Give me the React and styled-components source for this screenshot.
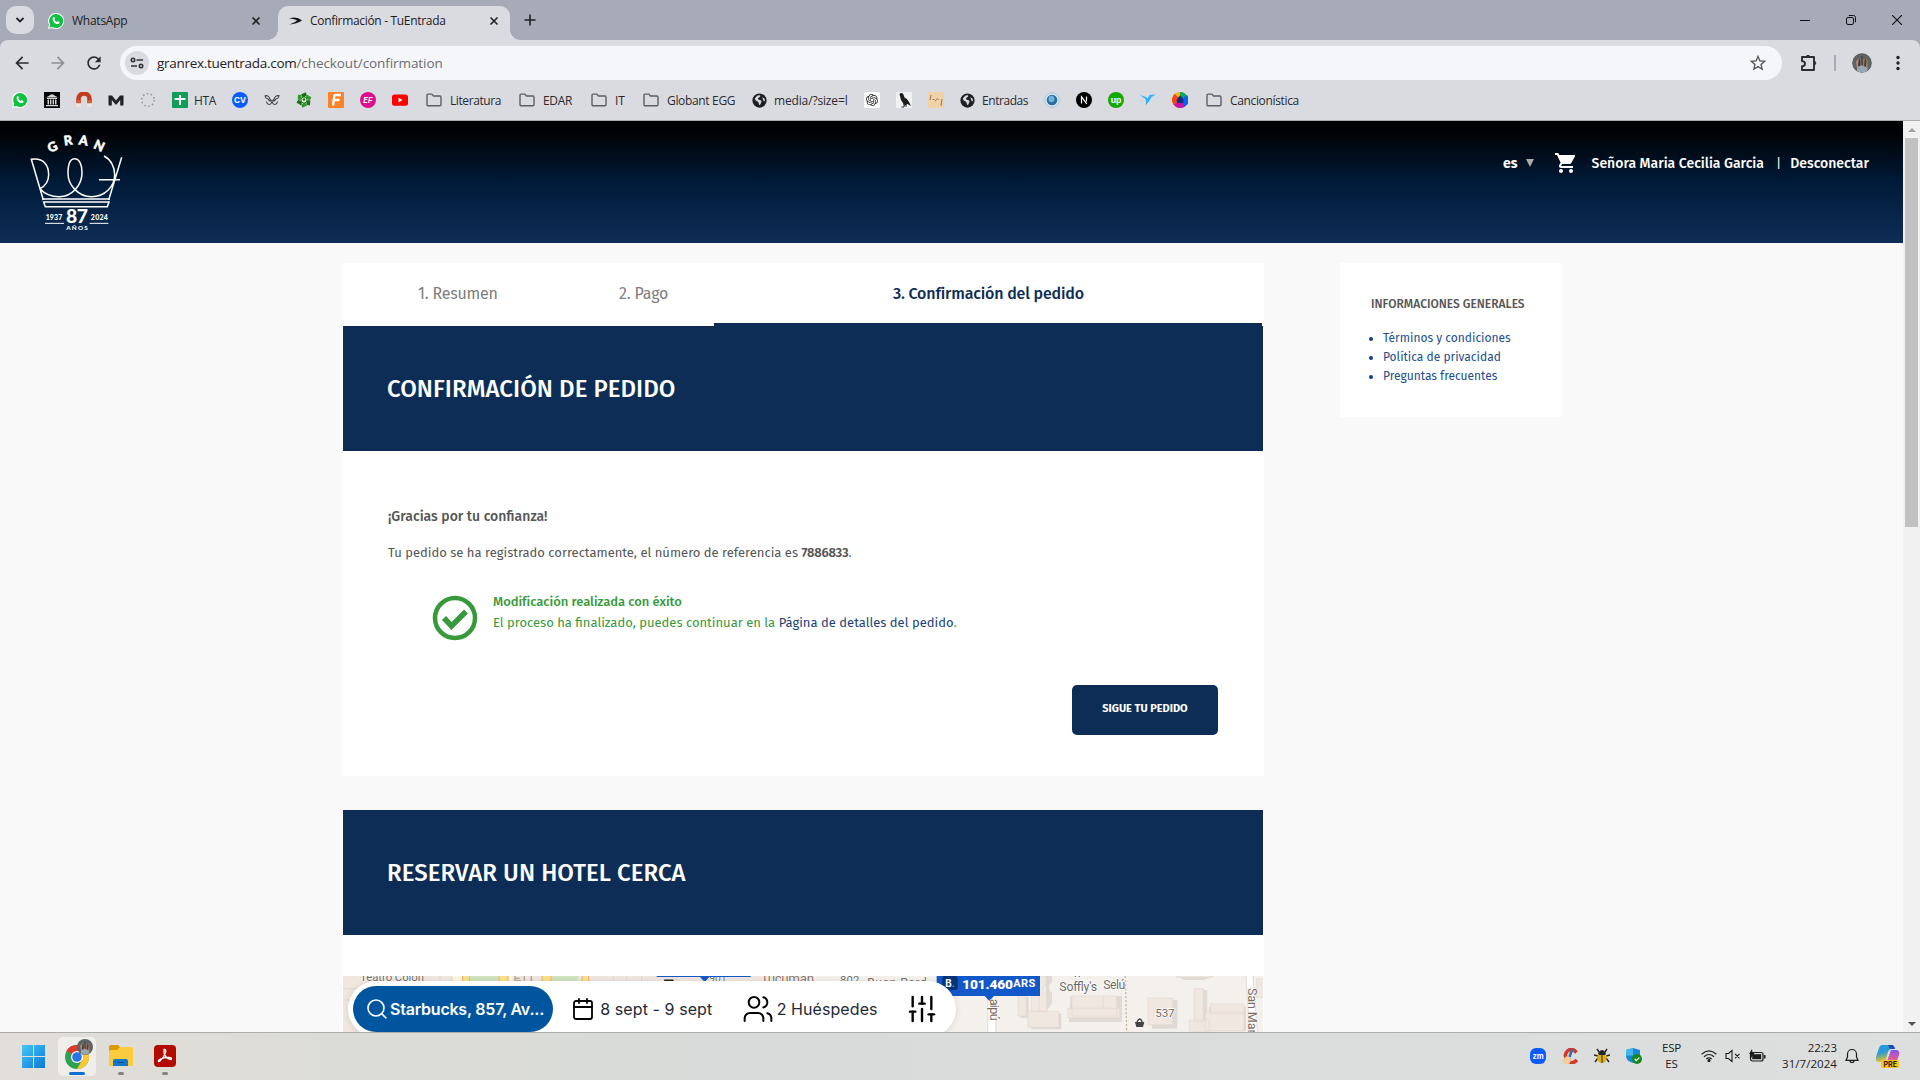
import React from "react";
import styled, { createGlobalStyle, css } from "styled-components";
import { SiOpenai } from "react-icons/si";
import { Search, Calendar, Users, SlidersVertical } from "lucide-react";
import { MdShoppingCart, MdStarBorder, MdArrowBack, MdArrowForward, MdRefresh } from "react-icons/md";

const NAVY = "#0e2d56";
const ui = '"Open Sans", "Noto Sans", sans-serif';
const site = '"Fira Sans", "Noto Sans", "Open Sans", sans-serif';

const Global = createGlobalStyle`
  * { box-sizing: border-box; }
  body { margin: 0; overflow: hidden; font-family: ${ui}; }
  svg { display: block; flex: none; }
`;
const Screen = styled.div`
  width: 1920px; height: 1080px; display: flex; flex-direction: column; overflow: hidden; background: #f9f9f9;
`;
const Label = styled.span`
  font-size: ${(p) => p.$size || 12}px;
  font-weight: ${(p) => p.$weight || 400};
  letter-spacing: ${(p) => p.$ls || 0}px;
  color: ${(p) => p.$color || "inherit"};
  white-space: pre;
`;

/* ---------- browser chrome ---------- */
const TabStrip = styled.div`
  height: 40px; flex: none; background: #a7abb7; display: flex; align-items: flex-end; padding-left: 6px; color: #1f2024;
`;
const TabSearch = styled.div`
  width: 28px; height: 28px; margin-bottom: 6px; border-radius: 10px; background: #dadbe1; display: grid; place-items: center;
`;
const Tab = styled.div`
  position: relative; height: 34px; width: ${(p) => p.$w}px; display: flex; align-items: center; gap: ${(p) => p.$gap}px;
  padding: 0 11px 5px 10px; margin-left: ${(p) => p.$ml}px; border-radius: 10px 10px 0 0;
  ${(p) => p.$active && css`
    background: #dadbe1;
    &::before, &::after { content: ""; position: absolute; bottom: 0; width: 10px; height: 10px; }
    &::before { left: -10px; background: radial-gradient(circle at 0 0, transparent 9.5px, #dadbe1 10px); }
    &::after { right: -10px; background: radial-gradient(circle at 100% 0, transparent 9.5px, #dadbe1 10px); }
  `}
  > svg:last-child { margin-left: auto; }
`;
const NewTab = styled.div`margin: 0 auto 14px 14px;`;
const WindowButtons = styled.div`display: flex; gap: 36px; padding: 0 18px 15px 0;`;
const Toolbar = styled.div`
  height: 40px; flex: none; background: #a7abb7;
`;
const ToolbarInner = styled.div`
  height: 40px; background: #dadbe1; border-radius: 8px 8px 0 0; display: flex; align-items: center; padding: 6px 14px 0 12px; color: #2b2c30;
`;
const NavIcons = styled.div`display: flex; gap: 16px; width: 108px; > :nth-child(2) { color: #8e9097; }`;
const Omnibox = styled.div`
  width: 1662px; flex: none; height: 34px; border-radius: 17px; background: #f5f6f9; display: flex; align-items: center; padding: 0 14px 0 5px;
  > svg:last-child { margin-left: auto; }
`;
const SiteInfo = styled.div`width: 24px; height: 24px; border-radius: 50%; background: #dadbe1; display: grid; place-items: center; margin-right: 8px;`;
const ToolRight = styled.div`display: flex; align-items: center; margin: 0 24px 0 17px;`;
const Divider = styled.i`width: 2px; height: 16px; background: #a7abb7; margin: 0 16px 0 15px;`;
const Avatar = styled.div`
  width: 20px; height: 20px; border-radius: 50%; overflow: hidden;
`;
const BookmarkBar = styled.div`
  height: 41px; flex: none; background: #dadbe1; border-bottom: 1px solid #a9abaf; display: flex; align-items: center; padding-left: 4px; color: #2a2b2f;
`;
const Bookmark = styled.div`
  width: ${(p) => p.$w || 32}px; padding-left: 8px; display: flex; align-items: center; gap: ${(p) => p.$gap ?? 8}px; flex: none; height: 24px;
`;

/* ---------- page ---------- */
const Viewport = styled.div`height: 911px; flex: none; display: flex; overflow: hidden;`;
const Page = styled.div`width: 1903px; font-family: ${site}; overflow: hidden; background: #f9f9f9;`;
const SiteHeader = styled.header`
  height: 122px; background: linear-gradient(#000 0%, #000509 14%, #001a38 50%, #0e2d57 100%); display: flex; justify-content: space-between;
  padding: 11px 34px 0 25px; color: #fff;
`;
const UserNav = styled.nav`display: flex; align-items: center; height: 62px;`;
const Columns = styled.div`display: flex; align-items: flex-start; padding: 20px 0 0 342px; gap: 76px;`;
const Main = styled.main`width: 922px;`;
const Card = styled.section`background: #fff; height: ${(p) => p.$h}px; margin-bottom: 34px;`;
const Steps = styled.div`display: flex; height: 63px; padding: 0 2px 0 1px;`;
const Step = styled.div`
  width: ${(p) => p.$w}px; padding-left: ${(p) => p.$pl}px; line-height: 61px; height: 63px; color: #7d7d7d;
  ${(p) => p.$active && css`border-bottom: 3px solid ${NAVY}; color: ${NAVY};`}
`;
const Band = styled.h1`
  margin: 0 1px; height: 125px; background: ${NAVY}; color: #fff; padding: 0 0 0 44px; display: flex; align-items: center; line-height: 32px;
`;
const Body = styled.div`padding: 55px 46px 0 46px; color: #555;`;
const Line = styled.p`margin: 0 0 ${(p) => p.$mb || 0}px; height: 20px; line-height: 20px; white-space: nowrap;`;
const Notice = styled.div`display: flex; gap: 15px; padding: 0 0 0 44px; color: #36993a;`;
const NoticeText = styled.div`display: flex; flex-direction: column; margin-top: -4px;`;
const Button = styled.button`
  display: block; margin: 44px 0 0 auto; width: 146px; height: 50px; border: 0; border-radius: 5px; background: ${NAVY}; color: #fff; font-family: ${site};
  padding: 0 0 5px;
`;
const Aside = styled.aside`width: 222px; height: 154px; background: #fff; padding: 30px 0 0 31px; color: #555;`;
const Links = styled.ul`
  margin: 16px 0 0; padding: 0; color: #214e8c;
  li { height: 19px; line-height: 19px; list-style: none; display: flex; align-items: center; }
  li::before { content: ""; width: 4px; height: 4px; border-radius: 50%; background: #123f7e; margin: 1px 10px 0 -2px; flex: none; }
`;
const MapBox = styled.div`position: relative; height: 56px; margin: 41px 1px 0; overflow: hidden;`;
const SearchBar = styled.div`
  position: absolute; left: 5px; top: 5px; width: 608px; height: 56px; border-radius: 28px; background: #fff; display: flex; align-items: center;
  padding: 0 18px 0 5px; font-family: Inter, sans-serif; color: #1f2937; box-shadow: 0 1px 6px rgba(0,0,0,.12);
`;
const Place = styled.div`
  width: 201px; height: 46px; border-radius: 23px; background: #00559f; color: #fff; display: flex; align-items: center; gap: 1px; padding-left: 12px; margin-right: 18px;
`;
const Part = styled.div`display: flex; align-items: center; gap: ${(p) => p.$gap}px; width: ${(p) => p.$w}px; svg { color: #000; }`;
const Scrollbar = styled.div`
  width: 17px; background: #f1f1f1; display: flex; flex-direction: column; align-items: center; padding: 7px 0 6px;
`;
const Thumb = styled.div`width: 13px; height: 389px; background: #c1c1c1; margin: 6px 0 auto;`;

/* ---------- taskbar ---------- */
const Taskbar = styled.footer`
  height: 48px; border-top: 1px solid #a9acab; background: linear-gradient(90deg, #e2deda 0%, #dcdcd6 18%, #d8dbda 40%, #dadddc 70%, #dcdfde 100%);
  display: flex; justify-content: space-between; padding: 4px 20px 0 14px; color: #1c1c1c;
`;
const Apps = styled.div`display: flex; gap: 6px;`;
const TaskApp = styled.div`
  width: 38px; height: 39px; border-radius: 5px; display: flex; flex-direction: column; align-items: center; padding-top: ${(p) => p.$pt || 7}px;
  background: ${(p) => (p.$on ? "#f0eeeb" : "transparent")};
  &::after { content: ""; margin-top: auto; margin-bottom: 1px; height: 3px; border-radius: 2px; width: ${(p) => (p.$on ? 16 : p.$run ? 6 : 0)}px; background: ${(p) => (p.$on ? "#0b72d0" : "#85827f")}; }
`;
const Tray = styled.div`display: flex; height: 38px; align-items: center;`;
const Gap = styled.i`width: ${(p) => p.$w}px; flex: none;`;
const Stack = styled.div`display: flex; flex-direction: column; align-items: ${(p) => p.$align}; width: ${(p) => p.$w}px; line-height: 16px; padding-bottom: 1px;`;

/* ---------- icons ---------- */
const Close = () => <svg width="10" height="10" viewBox="0 0 10 10" stroke="#222" strokeWidth="1.6"><path d="M1.5 1.5l7 7M8.5 1.5l-7 7" /></svg>;
const WhatsApp = () => (
  <svg width="16" height="16" viewBox="0 0 16 16"><path d="M8 0a8 8 0 1 1-4 14.9L0 16l1.1-4A8 8 0 0 1 8 0z" fill="#fff" /><path d="M8 1a7 7 0 1 1-3.6 12.9L1.5 14.6l.8-2.8A7 7 0 0 1 8 1z" fill="#12c144" /><path d="M5.2 4.2c.5-.5 1-.3 1.2.2l.5 1.1c.1.4-.6.9-.5 1.2.5 1 1.3 1.8 2.4 2.3.3.1.8-.8 1.2-.7l1.3.7c.4.2.3 1.3-.5 1.8-1.4.8-3.2 0-4.6-1.4C4.7 7.900 4 5.500 5.200 4.200z" fill="#fff" /></svg>
);
const Folder = () => <svg width="16" height="14" viewBox="0 0 16 14" fill="none" stroke="#5c5e64" strokeWidth="1.4"><path d="M1 2.3q0-1.2 1.2-1.2h3.6l1.7 1.9h6.3q1.2 0 1.2 1.2v7.3q0 1.2-1.2 1.2H2.2Q1 12.7 1 11.5z" /></svg>;
const Globe = () => <svg width="15" height="15" viewBox="0 0 16 16"><circle cx="8" cy="8" r="7.6" fill="#1d1f23" /><path d="M3 5.5c1.5-.6 2-2.5 4-3 1.5-.3 2.5.5 1.5 1.5S6 5 6.5 6.5s3 .5 3.5 2-1 2.5-1.5 4.500c-1.500-.5-1-2.500-2-3.500S3 8 3 5.500zM11 4.500l2.500 1.500.3 3-1.800-1z" fill="#dadbe1" /></svg>;
const Box = ({ children, w = 16, h = 16 }) => <svg width={w} height={h} viewBox="0 0 16 16">{children}</svg>;
const GlyphText = ({ children, ...p }) => <text textAnchor="middle" fontFamily="Inter, sans-serif" fontWeight="700" {...p}>{children}</text>;
const AvatarArt = ({ s = 20 }) => (
  <svg width={s} height={s} viewBox="0 0 20 20"><circle cx="10" cy="10" r="10" fill="#5e635f" /><path d="M4 9q2-5 5-3l1 10H5z" fill="#a88a80" /><path d="M11 6q4-2 5 3v8h-5z" fill="#9c7468" /><path d="M7 5l1.5 2v6H6zM13 5l1.5 3-1 6H12z" fill="#473833" /><path d="M5 15q5-5 10 0v3q-5 3-10 0z" fill="#99a5b0" /><path d="M9.4 3h1.2v9H9.4z" fill="#3c4244" /></svg>
);
const petals = [0, 60, 120, 180, 240, 300];

function GranRexLogo() {
  const g = { fill: "#fff", fontFamily: 'Lato, sans-serif', fontWeight: 900, textAnchor: "middle" };
  return (
    <svg width="100" height="100" viewBox="75 36 300 300" fill="none" stroke="#fff" strokeWidth="4.5">
      <g {...g} stroke="#fff" strokeWidth="1.5" fontSize="39">
        <text transform="translate(163 93) rotate(-24)">G</text><text transform="translate(206 75) rotate(-8)">R</text>
        <text transform="translate(248 75) rotate(9)">A</text><text transform="translate(292 90) rotate(25)">N</text>
      </g>
      <path d="M130 240L94 118C132 112 146 138 146 164C146 185 135 198 120 206C134 222 154 230 178 230C215 230 246 196 246 158C246 132 237 116 224 116C211 116 204 134 204 160C204 197 236 230 274 230C316 230 344 198 344 164C344 140 332 118 312 108M365 112L326 240M297 179H360" />
      <path d="M126 237H330" strokeWidth="5" /><path d="M131 246H327L322 260H136z" strokeWidth="4.5" />
      <path d="M135 310H192M269 310H325" strokeWidth="3" />
      <g {...g} stroke="none"><text x="162" y="299" fontSize="21" textLength="50">1937</text><text x="298" y="299" fontSize="21" textLength="51">2024</text><text x="231" y="310" fontSize="58" textLength="66">87</text><text x="231" y="331" fontSize="19" textLength="65">AÑOS</text></g>
    </svg>
  );
}

function MapArt() {
  const t = { fontFamily: "Roboto, sans-serif", fill: "#6f6a68" };
  return (
    <svg width="920" height="56" viewBox="9 48 2760 168" preserveAspectRatio="none">
      <rect x="0" y="0" width="2800" height="240" fill="#f4f1ec" />
      <rect x="9" y="48" width="1400" height="168" fill="#f1e7e1" />
      <path d="M9 86H60M9 120H50M300 48V66M335 48V66M820 48V66M860 48V66M905 48V66M1010 48V66" stroke="#ddd8d4" strokeWidth="3" />
      <rect x="338" y="48" width="180" height="16" fill="#fff7df" /><rect x="390" y="48" width="85" height="16" fill="#cfe3bf" /><rect x="635" y="48" width="80" height="16" fill="#cfe3bf" />
      <g fill="#fbe28c" stroke="#f0a96a" strokeWidth="3"><rect x="368" y="40" width="20" height="30" /><rect x="477" y="40" width="27" height="30" /><rect x="606" y="40" width="27" height="30" /><rect x="726" y="40" width="20" height="30" /></g>
      <path d="M525 48v14h18M525 55h14M553 48v14M574 48v16" stroke="#b0a39c" strokeWidth="4" fill="none" />
      <g {...t} fontSize="34" stroke="#fff" strokeWidth="3" paintOrder="stroke">
        <text x="60" y="64" textLength="192">Teatro Colón</text><text x="1262" y="70" fontSize="40" textLength="160" fill="#8a7468">Tucumán</text><text x="1500" y="71" textLength="58">802</text>
        <text x="1582" y="81" fontSize="36" textLength="178">Buen Pard</text><text x="1108" y="66" fontSize="31" textLength="52">901</text>
      </g>
      <path d="M975 70V61H998V70" stroke="#222" strokeWidth="5" fill="none" />
      <path d="M950 47H1232V51H1108L1094 66L1080 51H950z" fill="#1358c8" />
      <path d="M1955 110V216" stroke="#fff" strokeWidth="20" /><path d="M1943 110V216M1968 110V216" stroke="#dad6d2" strokeWidth="2" />
      <path d="M2728 48L2742 216" stroke="#fff" strokeWidth="18" /><path d="M2718 48L2728 216M2739 48L2752 216" stroke="#d5d1cd" strokeWidth="2" />
      <path d="M2356 48L2360 216" stroke="#cdb5a3" strokeWidth="4" strokeDasharray="7 5" />
      <g fill="#e0dad5"><path d="M2042 112h24v62h-24zM2074 160h90v48h-90zM2192 108h154v78h-160zM2430 120h82v86h-76zM2570 90h32v126h-32zM2606 140h112v74h-112zM2512 48h110l-30 12h-60zM2118 48h18v20l-8 5v20l8 4v32l-20 30z" /></g>
      <g fill="#f1e7e1" stroke="#e4d6ce" strokeWidth="2"><path d="M2034 106h24v62h-24zM2064 154h92v48h-92zM2074 48h44v26l-8 6v20l10 6v48h-46zM2196 108h134v60h-134zM2184 145h155v28h-155zM2424 114h74v80h-74zM2562 86h28v100h-28zM2548 180h60v36h-60zM2612 132h100v30h-100zM2596 156h116v56h-116zM2510 40h105v12h-105zM2750 56h30v56h-30z" /></g>
      <path d="M2290 108v36M2098 74v80" stroke="#e4d6ce" strokeWidth="2" />
      <path d="M1790 40H2100V108H1962L1948 123L1934 108H1790z" fill="#1358c8" /><rect x="1807" y="48" width="46" height="42" rx="7" fill="#063577" />
      <text x="1816" y="80" fontFamily="Inter, sans-serif" fontSize="29" fontWeight="700" fill="#fff">B<tspan fill="#3da8ee">.</tspan></text>
      <text x="1867" y="87" fontFamily="Roboto, sans-serif" fontSize="41" fontWeight="900" fill="#fff" textLength="152">101.460</text>
      <text x="2020" y="81" fontFamily="Roboto, sans-serif" fontSize="33" fontWeight="700" fill="#fff" textLength="66">ARS</text>
      <g {...t} fontSize="37" stroke="#fff" strokeWidth="4" paintOrder="stroke"><text x="2158" y="94" textLength="113">Soffly's</text><text x="2290" y="87" textLength="66">Selú</text><text x="2446" y="172" fontSize="35" textLength="58">537</text></g>
      <path d="M2206 44v6M2218 44v6" stroke="#555" strokeWidth="4" />
      <g {...t} fill="#7b6a5e" fontSize="38" stroke="#fff" strokeWidth="3" paintOrder="stroke"><text transform="translate(1950 116) rotate(90)" textLength="66">aipú</text><text transform="translate(2724 84) rotate(90)" textLength="150">San Mart</text></g>
      <path d="M2385 186h28l-4 15h-20z" fill="#444" /><path d="M2391 186q8-18 16 0" fill="none" stroke="#444" strokeWidth="4" />
    </svg>
  );
}

/* ---------- data ---------- */
const bookmarks = [
  { icon: <WhatsApp /> },
  { icon: <Box><rect width="16" height="16" fill="#000" /><path d="M2 5.5L8 2l6 3.5zM3 6h10v1H3zM3.5 7.5h1.5v5H3.5zM6 7.5h1.4v5H6zM8.6 7.5H10v5H8.6zM11 7.5h1.5v5H11zM2 13h12v1.3H2z" fill="#d5d5d5" /></Box> },
  { icon: <Box><path d="M2.5 11V7a5.5 5.5 0 0 1 11 0v4" fill="none" stroke="#c33a1c" strokeWidth="4.5" /><path d="M2.5 11.5V8M13.5 11.5V8" stroke="#dd5b30" strokeWidth="4" /><path d="M.4 11.5h4.3V15H.4zM11.3 11.5h4.3V15h-4.3z" fill="#efe5de" /></Box> },
  { icon: <Box><path d="M.5 13.5V3.5H4L8 8.500 12 3.500h3.500v10h-3.300V8L8.500 12.500h-1L3.800 8v5.500z" fill="#222" /></Box> },
  { icon: <Box><circle cx="8" cy="8" r="6.3" fill="none" stroke="#9a9ca3" strokeWidth="1.6" strokeDasharray="1.6 2.35" /></Box> },
  { icon: <Box><rect width="16" height="16" rx="1" fill="#0f9d58" /><path d="M7 3h2v10H7zM2.5 6h11v2h-11z" fill="#fff" /></Box>, text: "HTA", w: 60, gap: 6, ls: -0.3 },
  { icon: <Box><circle cx="8" cy="8" r="8" fill="#0b5cff" /><GlyphText x="8" y="11" fontSize="8" fill="#fff">CV</GlyphText></Box> },
  { icon: <Box><path d="M1 3.5q3.500-.5 5 3.500 1 2 2 2t2-2q1.500-4 5-3.500-.5 3-3 3.500M1 3.500q.5 3 3 3.500M2.500 9.500q.5 3 3 3 2-.5 2.500-3 .5 2.500 2.500 3 2.500 0 3-3M4 7l2.500 2.500M12 7L9.500 9.500" fill="none" stroke="#444" strokeWidth="1.100" /></Box> },
  { icon: <Box>{petals.map((a) => <path key={a} transform={`rotate(${a} 8 8)`} d="M7 6L5 2.500 9.500.2l1.500 3z" fill={a % 120 ? "#2f9a28" : "#1d6d1a"} />)}<circle cx="8" cy="8" r="3" fill="#e9efe4" stroke="#2a8a25" /><circle cx="8" cy="7.5" r="1.2" fill="#1d6d1a" /></Box> },
  { icon: <Box><rect width="16" height="16" rx="1" fill="#ff8228" /><path d="M5 13.5L6.2 4Q6.4 3 7.4 3H13M6 8h5.5" stroke="#fff" strokeWidth="2.3" fill="none" /></Box> },
  { icon: <Box><circle cx="8" cy="8" r="8" fill="#d9108e" /><GlyphText x="7.8" y="10.8" fontSize="7.5" fontStyle="italic" fill="#fff">EF</GlyphText></Box> },
  { icon: <Box><rect y="2.5" width="16" height="11.3" rx="2.5" fill="#f00" /><path d="M6.5 5.8v4.6L10.5 8z" fill="#fff" /></Box>, w: 34 },
  { icon: <Folder />, text: "Literatura", w: 93, ls: -0.4 },
  { icon: <Folder />, text: "EDAR", w: 72, ls: -0.3 },
  { icon: <Folder />, text: "IT", w: 52 },
  { icon: <Folder />, text: "Globant EGG", w: 109, ls: -0.33 },
  { icon: <Globe />, text: "media/?size=l", w: 112, gap: 7, ls: -0.15 },
  { icon: <Box><rect width="16" height="16" rx="2" fill="#fff" /><SiOpenai x="2" y="2" size={12} color="#222" /></Box> },
  { icon: <Box><rect width="16" height="16" fill="#f1f1f1" /><path d="M3.5 2q2-2 4 .5l1 3q3 1 4.500 4.500l2 4-3.500-2L8.500 14 7 11 5 8z" fill="#1c1c1c" /><path d="M8 11.5V15H5.500M10 12.500V15" stroke="#333" fill="none" /></Box> },
  { icon: <Box><rect width="16" height="16" fill="#f1d2a6" /><path d="M3 3L2 8M4.500 8q1-2 2 0t2-.5 2 .5M14 7l-1 7" fill="none" stroke="#8b7a5f" /></Box>, w: 32 },
  { icon: <Globe />, text: "Entradas", w: 84, gap: 7, ls: -0.45 },
  { icon: <Box><circle cx="8" cy="8" r="7.3" fill="#d9e8f3" stroke="#9cc3e0" /><circle cx="8" cy="8" r="5.3" fill="#2b6d9f" /><ellipse cx="7.5" cy="7" rx="3" ry="3.2" fill="#6fb2da" /></Box> },
  { icon: <Box><circle cx="8" cy="8" r="8" fill="#000" /><path d="M5.500 11.500V4.800l5.300 7M10.500 4.500v5" fill="none" stroke="#fff" strokeWidth="1.2" /></Box> },
  { icon: <Box><circle cx="8" cy="8" r="8" fill="#14a800" /><GlyphText x="8" y="10.5" fontSize="8.5" fill="#fff">up</GlyphText></Box> },
  { icon: <Box><path d="M0 3l6 2 1.500 1.500L9.500 3 16 2.500 11.500 5Q10 9 5.500 13.500 6.500 9 5.500 7z" fill="#29b2fe" /></Box> },
  { icon: <Box><circle cx="8" cy="8" r="8" fill="#ffb400" /><path d="M8 8V0a8 8 0 0 1 7 12z" fill="#08a860" /><path d="M8 8l7-5a8 8 0 0 1-5 12.800z" fill="#0a62f0" /><path d="M8 8l5 6.300A8 8 0 0 1 1.500 12.500z" fill="#c412a4" /><path d="M8 8L1.600 12.800A8 8 0 0 1 3 1.800z" fill="#f4431f" /><path d="M8 3.500q5 3.500 3 7.500H5Q3.500 7.500 8 3.500z" fill="#122d7c" /></Box>, w: 34 },
  { icon: <Folder />, text: "Cancionística", w: 110, ls: -0.35 },
];

export default function App() {
  return (
    <Screen>
      <Global />
      <TabStrip>
        <TabSearch><svg width="10" height="6" viewBox="0 0 10 6" fill="none" stroke="#222" strokeWidth="1.8"><path d="M1.5 1L5 4.500 8.500 1" /></svg></TabSearch>
        <Tab $w={234} $gap={8} $ml={4}><WhatsApp /><Label $ls={-0.25}>WhatsApp</Label><Close /></Tab>
        <Tab $w={232} $gap={6} $ml={6} $active>
          <Box><path d="M1 5.500Q9 3 14 7.500 9 11 1 11.500 7 9.500 9 7.500 7 6 1 5.500z" fill="#15161a" /></Box><Label $ls={-0.32}>Confirmación - TuEntrada</Label><Close />
        </Tab>
        <NewTab><svg width="12" height="12" viewBox="0 0 12 12" stroke="#222" strokeWidth="1.6"><path d="M6 .5v11M.5 6h11" /></svg></NewTab>
        <WindowButtons>
          <svg width="10" height="10" stroke="#111"><path d="M0 5.5h10" /></svg>
          <svg width="10" height="10" viewBox="0 0 10 10" fill="none" stroke="#111"><rect x=".5" y="2.5" width="7" height="7" rx="1.5" /><path d="M2.8.5H7.500Q9.500.5 9.500 2.500v4.700" /></svg>
          <svg width="10" height="10" stroke="#111" strokeWidth="1.1"><path d="M0 0l10 10M10 0L0 10" /></svg>
        </WindowButtons>
      </TabStrip>
      <Toolbar><ToolbarInner>
        <NavIcons><MdArrowBack size={20} /><MdArrowForward size={20} /><MdRefresh size={20} /></NavIcons>
        <Omnibox>
          <SiteInfo><svg width="14" height="12" viewBox="0 0 14 12" fill="none" stroke="#333" strokeWidth="1.6"><circle cx="3" cy="3" r="1.7" /><path d="M6.500 3H13M1 9h6" /><circle cx="11" cy="9" r="1.7" /></svg></SiteInfo>
          <Label $size={13.5} $ls={-0.29} $color="#1f2024">granrex.tuentrada.com</Label><Label $size={13.5} $ls={-0.08} $color="#6a6c72">/checkout/confirmation</Label>
          <MdStarBorder size={20} color="#55575c" />
        </Omnibox>
        <ToolRight><svg width="20" height="20" viewBox="0 0 20 20" fill="none" stroke="#2b2c30" strokeWidth="1.9" strokeLinejoin="round"><path d="M3 4h12v13H3v-3.700q3-.2 3-2.600t-3-2.600z" /><path d="M7.300 4a1.700 1.700 0 0 1 3.400 0M15 8.300a1.800 1.800 0 0 1 0 3.600" fill="#2b2c30" strokeWidth="1" /></svg><Divider /><Avatar><AvatarArt /></Avatar></ToolRight>
        <svg width="4" height="16" viewBox="0 0 4 16" fill="#222"><circle cx="2" cy="2.5" r="1.7" /><circle cx="2" cy="8" r="1.7" /><circle cx="2" cy="13.5" r="1.7" /></svg>
      </ToolbarInner></Toolbar>
      <BookmarkBar>
        {bookmarks.map((b, i) => <Bookmark key={i} $w={b.w} $gap={b.gap}>{b.icon}{b.text && <Label $ls={b.ls}>{b.text}</Label>}</Bookmark>)}
      </BookmarkBar>

      <Viewport>
        <Page>
          <SiteHeader>
            <GranRexLogo />
            <UserNav>
              <Label $size={14} $weight={700}>es</Label><Gap $w={8} />
              <svg width="8" height="8"><path d="M0 0h8L4 8z" fill="#aaa" /></svg><Gap $w={20} />
              <MdShoppingCart size={24} /><Gap $w={14} />
              <Label $size={14} $weight={500}>Señora Maria Cecilia Garcia</Label><Gap $w={12} />
              <Label $size={13}>|</Label><Gap $w={9} />
              <Label $size={14} $weight={500}>Desconectar</Label>
            </UserNav>
          </SiteHeader>
          <Columns>
            <Main>
              <Card $h={513}>
                <Steps>
                  <Step $w={201} $pl={75}><Label $size={16} $ls={-0.2}>1. Resumen</Label></Step>
                  <Step $w={170} $pl={75}><Label $size={16} $ls={-0.15}>2. Pago</Label></Step>
                  <Step $w={548} $pl={179} $active><Label $size={16} $weight={500} $ls={-0.17}>3. Confirmación del pedido</Label></Step>
                </Steps>
                <Band><Label $size={24} $weight={500} $ls={0.06}>CONFIRMACIÓN DE PEDIDO</Label></Band>
                <Body>
                  <Line $mb={16}><Label $size={14} $weight={500}>¡Gracias por tu confianza!</Label></Line>
                  <Line $mb={33}><Label $size={13}>Tu pedido se ha registrado correctamente, el número de referencia es </Label><Label $size={13} $weight={600} $ls={-0.25}>7886833</Label><Label $size={13}>.</Label></Line>
                  <Notice>
                    <svg width="46" height="46" viewBox="0 0 46 46" fill="none" stroke="#36993a"><circle cx="23" cy="23" r="20" strokeWidth="4.5" /><path d="M12 23l7.500 8L34 16.500" strokeWidth="5.5" /></svg>
                    <NoticeText>
                      <Line $mb={1}><Label $size={13} $weight={500} $ls={-0.03}>Modificación realizada con éxito</Label></Line>
                      <Line><Label $size={13}>El proceso ha finalizado, puedes continuar en la </Label><Label $size={13} $color="#1c3f78">Página de detalles del pedido</Label><Label $size={13}>.</Label></Line>
                    </NoticeText>
                  </Notice>
                  <Button><Label $size={11} $weight={700}>SIGUE TU PEDIDO</Label></Button>
                </Body>
              </Card>
              <Card $h={260}>
                <Band><Label $size={24} $weight={500} $ls={0.06}>RESERVAR UN HOTEL CERCA</Label></Band>
                <MapBox>
                  <MapArt />
                  <SearchBar>
                    <Place><Search size={24} strokeWidth={1.6} /><Label $size={16} $weight={600} $ls={-0.22}>Starbucks, 857, Av...</Label></Place>
                    <Part $gap={5} $w={171}><Calendar size={24} strokeWidth={1.8} /><Label $size={16} $ls={0.08}>8 sept - 9 sept</Label></Part>
                    <Part $gap={3} $w={165}><Users size={32} strokeWidth={1.5} /><Label $size={16} $ls={0.08}>2 Huéspedes</Label></Part>
                    <Part><SlidersVertical size={32} strokeWidth={1.8} /></Part>
                  </SearchBar>
                </MapBox>
              </Card>
            </Main>
            <Aside>
              <Line><Label $size={12} $weight={500}>INFORMACIONES GENERALES</Label></Line>
              <Links>
                <li><Label $size={12}>Términos y condiciones</Label></li>
                <li><Label $size={12}>Política de privacidad</Label></li>
                <li><Label $size={12}>Preguntas frecuentes</Label></li>
              </Links>
            </Aside>
          </Columns>
        </Page>
        <Scrollbar>
          <svg width="8" height="4"><path d="M0 4L4 0l4 4z" fill="#a3a3a3" /></svg><Thumb />
          <svg width="8" height="4"><path d="M0 0l4 4 4-4z" fill="#505050" /></svg>
        </Scrollbar>
      </Viewport>

      <Taskbar>
        <Apps>
          <TaskApp $pt={8}><svg width="23" height="23" viewBox="0 0 23 23"><defs><linearGradient id="win" x2="1" y2="1" gradientUnits="objectBoundingBox"><stop stopColor="#46c8f8" /><stop offset="1" stopColor="#0a78d6" /></linearGradient></defs><path d="M0 0h11v11H0zM12 0h11v11H12zM0 12h11v11H0zM12 12h11v11H12z" fill="url(#win)" /></svg></TaskApp>
          <TaskApp $on $pt={2}>
            <svg width="32" height="32" viewBox="0 0 32 32"><circle cx="16" cy="18" r="12" fill="#2ea24f" /><path d="M5.600 12A12 12 0 0 1 26.400 12H16z" fill="#e03a2c" /><path d="M5.600 12A12 12 0 0 1 16 6v12z" fill="#e03a2c" /><path d="M16 12h10.400A12 12 0 0 1 16 30l5.200-9z" fill="#fcc934" /><circle cx="16" cy="18" r="6" fill="#fff" /><circle cx="16" cy="18" r="4.8" fill="#2a73e8" /><g transform="translate(16 0) scale(.8)"><AvatarArt /></g></svg>
          </TaskApp>
          <TaskApp $run $pt={7}><svg width="24" height="24" viewBox="0 0 24 24"><path d="M0 3q0-2 2-2h7l3 3h-2v4H0z" fill="#d99a06" /><path d="M0 8q0-2 2-2h6l3-3h11q2 0 2 2v17H0z" fill="#fccb3d" /><path d="M4 22v-5q0-2 2-2h11q2 0 2 2v5z" fill="#1476c6" /><path d="M8 18.500h7" stroke="#0a4f93" /></svg></TaskApp>
          <TaskApp $run $pt={8}><svg width="22" height="22" viewBox="0 0 22 22"><rect width="22" height="22" rx="4" fill="#b30b00" /><path d="M10 4.500q2-.5 1.800 2Q11 11 5.500 16.500q-1.500.5-1-1Q9 12 15.500 12.500q3 .5 1.500 2Q11.500 14 10 8z" fill="none" stroke="#fff" strokeWidth="1.3" /></svg></TaskApp>
        </Apps>
        <Tray>
          <Box><rect width="16" height="16" rx="6" fill="#0b5cff" /><GlyphText x="8" y="10.5" fontSize="7.5" fill="#fff">zm</GlyphText></Box><Gap $w={16} />
          <Box><path d="M14.500 4.500Q10-1 5.500 3T6 13q4 4 9-1" fill="none" stroke="#d5392c" strokeWidth="3.6" /><path d="M10 1.500L7.500 9" stroke="#2d6db0" strokeWidth="2.5" /><path d="M0 12l5-4 5 3-3 5H2z" fill="#f0cf9a" /></Box><Gap $w={16} />
          <Box><path d="M3 1l2 3M13 1l-2 3M0 7l4 1M16 7l-4 1M1 14l3-4M15 14l-3-4" stroke="#222" strokeWidth="1.4" /><ellipse cx="8" cy="9.5" rx="4.8" ry="5.5" fill="#e2af12" /><path d="M4 5q4-6 8 0l-1 2H5zM7.500 7h1v8h-1z" fill="#262626" /></Box><Gap $w={16} />
          <Box><path d="M7 0l7 2v6q0 5-7 7-7-2-7-7V2z" fill="#1a86d9" /><path d="M7 0v7.500H0V2z" fill="#44b6ee" /><circle cx="11" cy="11" r="5" fill="#128a1c" /><path d="M8.700 11l1.600 1.600 3-3" stroke="#fff" strokeWidth="1.3" fill="none" /></Box><Gap $w={17} />
          <Stack $w={25} $align="center"><Label $size={11.5} $ls={-0.2}>ESP</Label><Label $size={11.5} $ls={-0.2}>ES</Label></Stack><Gap $w={17} />
          <svg width="16" height="12" viewBox="0 0 16 12" fill="none" stroke="#1c1c1c" strokeWidth="1.2"><path d="M.6 4.200Q8-2.500 15.400 4.200M3 6.700q5-4.400 10 0M5.300 9q2.700-2.300 5.400 0" /><circle cx="8" cy="10.5" r="1" fill="#1c1c1c" /></svg><Gap $w={8} />
          <svg width="16" height="14" viewBox="0 0 16 14" fill="none" stroke="#1c1c1c" strokeWidth="1.1"><path d="M1 4.500h2.500L7 1.500v11L3.500 9.500H1zM10 4.800l4.500 4.500M14.500 4.800L10 9.300" /></svg><Gap $w={8} />
          <svg width="17" height="14" viewBox="0 0 17 14"><rect x="1.5" y="3.5" width="12.5" height="8.5" rx="2" fill="none" stroke="#1c1c1c" strokeWidth="1.2" /><rect x="3.2" y="5.2" width="9" height="5" fill="#1c1c1c" /><path d="M15 6h1.500v3.500H15zM3 0L0 5h2v4l3.500-5h-2z" fill="#1c1c1c" /></svg>
          <Stack $w={71} $align="flex-end"><Label $size={11.5}>22:23</Label><Label $size={11.5} $ls={0.05}>31/7/2024</Label></Stack><Gap $w={8} />
          <svg width="14" height="16" viewBox="0 0 14 16" fill="none" stroke="#1c1c1c" strokeWidth="1.2"><path d="M2.500 6a4.500 4.500 0 0 1 9 0v3l1.500 3.300H1L2.500 9zM5 12.500a2 2 0 0 0 4 0" /></svg><Gap $w={17} />
          <svg width="24" height="24" viewBox="0 0 24 24"><defs><linearGradient id="cp" x2=".3" y2="1"><stop stopColor="#1a9fe0" /><stop offset=".5" stopColor="#2f9ad0" /><stop offset="1" stopColor="#f2c81f" /></linearGradient><linearGradient id="cq" x2="0" y2="1"><stop stopColor="#8a52e8" /><stop offset="1" stopColor="#f1608a" /></linearGradient></defs><path d="M6 1h10q2 0 3 4h-4q-2 0-3 3l-2 8q-1 2-3 2H3q-4 0-3-5L3 4q1-3 3-3z" fill="url(#cp)" /><path d="M12 1h4q2 0 3 4h-5z" fill="#2448b8" /><path d="M15 6h6q3 1 2 5l-2 6H11z" fill="url(#cq)" /><rect x="5" y="16" width="18" height="8" rx="1.5" fill="#fbc01c" /><GlyphText x="14.2" y="22.5" fontSize="7" fill="#222">PRE</GlyphText></svg>
        </Tray>
      </Taskbar>
    </Screen>
  );
}
